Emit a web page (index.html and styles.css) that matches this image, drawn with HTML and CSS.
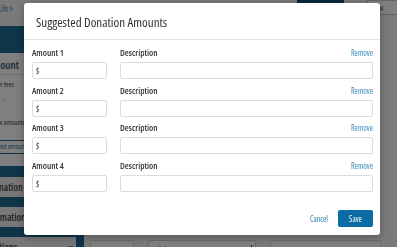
FILE: index.html
```html
<!DOCTYPE html>
<html lang="en">
<head>
    <meta charset="UTF-8">
    <meta name="viewport" content="width=device-width, initial-scale=1.0">
    <title>Suggested Donation Amounts</title>
    <link rel="stylesheet" href="styles.css">
</head>
<body>
    <div class="page">
        <div class="topbar">
            <span class="crumb">Giving for Life &gt;</span>
            <span class="top-dark"></span>
            <span class="top-view">View</span>
        </div>
        <div class="layout">
            <aside class="sidebar">
                <div class="side-panel">
                    <div class="side-head"></div>
                    <div class="side-title">Amount</div>
                    <div class="side-text first">Cover fees</div>
                    <div class="side-dash">-</div>
                    <div class="side-text">Show amounts</div>
                    <div class="side-btn">Suggested amounts</div>
                </div>
                <div class="side-sections">
                    <div class="side-row">Donation</div>
                    <div class="side-row info">Information</div>
                    <div class="side-row questions">Questions <span class="chev">&#8964;</span></div>
                </div>
            </aside>
            <div class="divider"></div>
            <main class="main">
                <div class="field-row">
                    <div class="box box-sm"></div>
                    <div class="box box-md">Alabama <span class="caret"></span></div>
                    <div class="box box-lg"></div>
                </div>
            </main>
        </div>
    </div>

    <div class="overlay"></div>

    <div class="modal">
        <div class="modal-header">
            <h2>Suggested Donation Amounts</h2>
        </div>
        <div class="modal-body">
            <div class="amount-row">
                <div class="col-amount">
                    <label>Amount 1</label>
                    <div class="input">$</div>
                </div>
                <div class="col-desc">
                    <div class="desc-head"><label>Description</label><a class="remove">Remove</a></div>
                    <div class="input"></div>
                </div>
            </div>
            <div class="amount-row">
                <div class="col-amount">
                    <label>Amount 2</label>
                    <div class="input">$</div>
                </div>
                <div class="col-desc">
                    <div class="desc-head"><label>Description</label><a class="remove">Remove</a></div>
                    <div class="input"></div>
                </div>
            </div>
            <div class="amount-row">
                <div class="col-amount">
                    <label>Amount 3</label>
                    <div class="input">$</div>
                </div>
                <div class="col-desc">
                    <div class="desc-head"><label>Description</label><a class="remove">Remove</a></div>
                    <div class="input"></div>
                </div>
            </div>
            <div class="amount-row">
                <div class="col-amount">
                    <label>Amount 4</label>
                    <div class="input">$</div>
                </div>
                <div class="col-desc">
                    <div class="desc-head"><label>Description</label><a class="remove">Remove</a></div>
                    <div class="input"></div>
                </div>
            </div>
        </div>
        <div class="modal-footer">
            <a class="cancel">Cancel</a>
            <button class="save">Save</button>
        </div>
    </div>
</body>
</html>
```

FILE: styles.css
```css
html, body {
    margin: 0;
    padding: 0;
    height: 100%;
    overflow: hidden;
}
body {
    font-family: "Open Sans", Arial, sans-serif;
    font-stretch: 78%;
    background-color: #f4f4f4;
    color: #333;
}
.page {
    width: 397px;
    height: 247px;
    overflow: hidden;
}
.topbar {
    height: 20px;
    display: flex;
    align-items: flex-start;
}
.crumb {
    font-size: 8px;
    line-height: 17px;
    color: #2f7fae;
    margin-left: -30px;
    width: 70px;
    white-space: nowrap;
}
.top-dark {
    margin-left: auto;
    width: 47px;
    height: 3px;
    background-color: #0b4f72;
}
.top-view {
    margin-left: 23px;
    width: 30px;
    height: 15px;
    box-sizing: border-box;
    border: 1px solid #c9c9c9;
    border-right: none;
    background-color: #fff;
    font-size: 8px;
    line-height: 13px;
    padding-left: 2px;
    color: #2f7fae;
}
.layout {
    display: flex;
}
.sidebar {
    width: 136px;
    margin-left: -60px;
    padding-top: 6px;
    flex-shrink: 0;
}
.side-panel {
    background-color: #fff;
    padding-bottom: 12px;
}
.side-head {
    height: 27px;
    background-color: #1d6c92;
}
.side-title {
    font-size: 11px;
    font-weight: 600;
    color: #1f5572;
    padding: 4px 0 0 47px;
    height: 17px;
    border-bottom: 1px solid #ddd;
}
.side-text {
    font-size: 7px;
    line-height: 12px;
    height: 12px;
    color: #444;
    padding-left: 49px;
    white-space: nowrap;
}
.side-text.first {
    margin-top: 4px;
}
.side-dash {
    height: 26px;
    font-size: 7px;
    line-height: 18px;
    color: #666;
    padding-left: 62px;
}
.side-btn {
    margin: 11px 0 0 40px;
    height: 14px;
    box-sizing: border-box;
    border: 1px solid #1d6c92;
    font-size: 7px;
    line-height: 12px;
    color: #1d6c92;
    padding-left: 1px;
    white-space: nowrap;
    overflow: hidden;
}
.side-sections {
    background-color: #1d6c92;
    padding-top: 11px;
    display: flex;
    flex-direction: column;
    gap: 10px;
}
.side-row {
    background-color: #eee;
    height: 20px;
    font-size: 10px;
    font-weight: 600;
    line-height: 20px;
    color: #444;
    padding-left: 49px;
    white-space: nowrap;
    overflow: hidden;
    position: relative;
}
.side-row.info {
    padding-left: 42px;
}
.side-row.questions {
    padding-left: 41px;
}
.chev {
    position: absolute;
    left: 127px;
    top: -2px;
    font-size: 9px;
    color: #1d6c92;
}
.divider {
    width: 8px;
    background-color: #1d6c92;
    flex-shrink: 0;
    margin-top: 215px;
    height: 20px;
}
.main {
    flex: 1;
    padding-top: 220px;
}
.field-row {
    display: flex;
    gap: 14px;
    padding-left: 6px;
}
.box {
    height: 18px;
    box-sizing: border-box;
    border: 1px solid #d5d5d5;
    border-radius: 2px;
    background-color: #fff;
    font-size: 7px;
    color: #555;
    padding: 3px 8px;
    position: relative;
}
.box-sm { width: 44px; }
.box-md { width: 108px; }
.box-lg { width: 111px; }
.caret {
    position: absolute;
    right: 3px;
    top: 4px;
    width: 1px;
    height: 5px;
    background-color: #333;
}

.overlay {
    position: fixed;
    inset: 0;
    background-color: rgba(0, 0, 0, 0.5);
}
.modal {
    position: fixed;
    left: 24px;
    top: 3px;
    width: 356px;
    height: 232px;
    background-color: #fff;
    border-radius: 3px;
    box-shadow: 0 2px 8px rgba(0, 0, 0, 0.3);
    display: flex;
    flex-direction: column;
}
.modal-header {
    height: 36px;
    border-bottom: 1px solid #e2e2e2;
    padding-left: 12px;
}
.modal-header h2 {
    margin: 0;
    font-size: 13px;
    font-weight: 400;
    line-height: 39px;
    color: #333;
}
.modal-body {
    padding: 7px 7px 0 8px;
}
.amount-row {
    display: flex;
    gap: 13px;
    margin-bottom: 5.5px;
}
.col-amount {
    width: 75px;
}
.col-desc {
    flex: 1;
}
label {
    display: block;
    font-size: 9px;
    font-weight: 600;
    line-height: 12px;
    margin-bottom: 3px;
    color: #333;
}
.desc-head {
    display: flex;
    justify-content: space-between;
}
.remove {
    font-size: 8px;
    line-height: 12px;
    color: #3a8cbd;
}
.input {
    height: 17px;
    box-sizing: border-box;
    border: 1px solid #dcdcdc;
    border-radius: 2px;
    font-size: 8px;
    line-height: 15px;
    padding-left: 3px;
    color: #333;
}
.modal-footer {
    margin-top: auto;
    display: flex;
    justify-content: flex-end;
    align-items: center;
    gap: 10px;
    padding: 0 7px 8px 0;
}
.cancel {
    font-size: 8px;
    color: #2f7fb3;
}
.save {
    width: 35px;
    height: 17px;
    border: none;
    border-radius: 2px;
    background-color: #0a6ca4;
    color: #fff;
    font-family: "Open Sans", Arial, sans-serif;
    font-stretch: 78%;
    font-size: 8px;
    padding: 0;
}
```
